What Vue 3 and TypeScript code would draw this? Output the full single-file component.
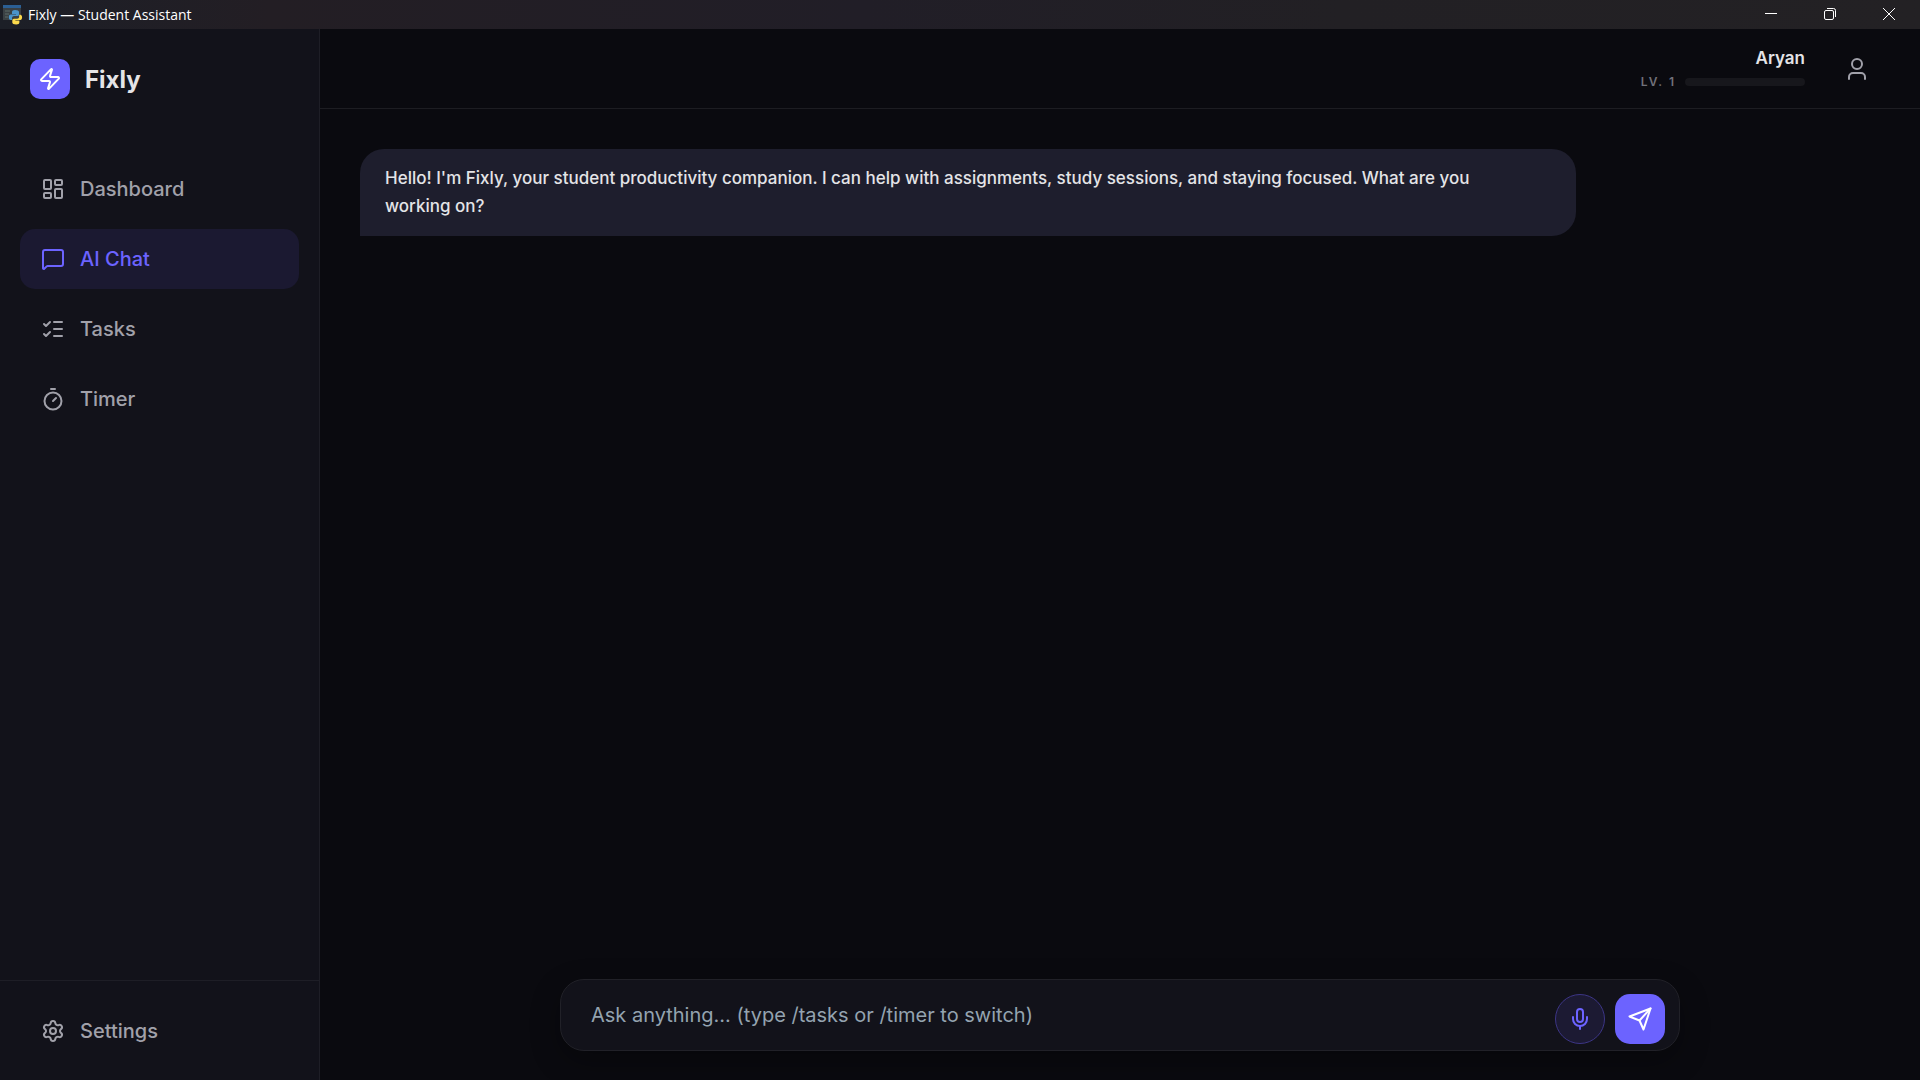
<script setup lang="ts">
import { ref } from 'vue'

interface NavItem {
  id: string
  label: string
  paths: string[]
}

const navItems: NavItem[] = [
  {
    id: 'dashboard',
    label: 'Dashboard',
    paths: [
      'M4 3h5a1 1 0 0 1 1 1v7a1 1 0 0 1-1 1H4a1 1 0 0 1-1-1V4a1 1 0 0 1 1-1z',
      'M15 3h5a1 1 0 0 1 1 1v3a1 1 0 0 1-1 1h-5a1 1 0 0 1-1-1V4a1 1 0 0 1 1-1z',
      'M15 12h5a1 1 0 0 1 1 1v7a1 1 0 0 1-1 1h-5a1 1 0 0 1-1-1v-7a1 1 0 0 1 1-1z',
      'M4 16h5a1 1 0 0 1 1 1v3a1 1 0 0 1-1 1H4a1 1 0 0 1-1-1v-3a1 1 0 0 1 1-1z',
    ],
  },
  {
    id: 'chat',
    label: 'AI Chat',
    paths: [
      'M22 17a2 2 0 0 1-2 2H6.828a2 2 0 0 0-1.414.586l-2.202 2.202A.71.71 0 0 1 2 21.286V5a2 2 0 0 1 2-2h16a2 2 0 0 1 2 2z',
    ],
  },
  {
    id: 'tasks',
    label: 'Tasks',
    paths: ['M13 5h8', 'M13 12h8', 'M13 19h8', 'm3 17 2 2 4-4', 'm3 7 2 2 4-4'],
  },
  {
    id: 'timer',
    label: 'Timer',
    paths: ['M10 2h4', 'M12 14l3-3', 'M20.500 14a8.500 8.500 0 1 1-17 0 8.500 8.500 0 0 1 17 0z'],
  },
]

const active = ref('chat')
const draft = ref('')
const messages = ref<string[]>([
  "Hello! I'm Fixly, your student productivity companion. I can help with assignments, study sessions, and staying focused. What are you working on?",
])

function send(): void {
  const text = draft.value.trim()
  if (!text) return
  messages.value.push(text)
  draft.value = ''
}
</script>

<template>
  <div class="window">
    <div class="titlebar">
      <svg class="app-icon" viewBox="0 0 20 20" aria-hidden="true">
        <rect x="0" y="0" width="18" height="15" fill="#3a4044" />
        <rect x="0" y="0" width="18" height="3" fill="#2b5f94" />
        <path d="M2 6h5M2 9h4M2 12h3" stroke="#5d6a66" stroke-width="1" />
        <path d="M12 5c-2 0-3 .8-3 2v2h4v.6H7.800c-1.300 0-2 1.200-2 2.700s.8 2.700 2 2.700H9v-2c0-1.200 1-2 2-2h3.500c1 0 1.500-.8 1.500-1.600V7c0-1.300-1.400-2-4-2z" fill="#4a94cc" />
        <path d="M13.200 19.500c2.200 0 3.200-.8 3.200-2v-2h-4V15h4.800c1.300 0 1.900-1.200 1.900-2.700s-.7-2.500-1.900-2.500h-1v2c0 1.200-1 2-2 2H11c-1 0-1.700.8-1.700 1.600v2.100c0 1.300 1.400 2 3.900 2z" fill="#fbd94c" />
      </svg>
      <span class="window-title">Fixly — Student Assistant</span>
      <div class="window-controls">
        <button type="button" aria-label="Minimize">
          <svg viewBox="0 0 12 12"><path d="M0 5.500h12" /></svg>
        </button>
        <button type="button" aria-label="Restore">
          <svg viewBox="0 0 12 12">
            <rect x=".5" y="2.500" width="9" height="9" rx="1.500" />
            <path d="M3 .5h6.500a2 2 0 0 1 2 2V9" />
          </svg>
        </button>
        <button type="button" aria-label="Close">
          <svg viewBox="0 0 12 12"><path d="M0 0l12 12M12 0L0 12" /></svg>
        </button>
      </div>
    </div>

    <div class="shell">
      <aside class="sidebar">
        <div class="brand">
          <span class="brand-mark">
            <svg class="icon" viewBox="0 0 24 24" aria-hidden="true">
              <path d="M4 14a1 1 0 0 1-.78-1.630l9.900-10.200a.5.5 0 0 1 .86.460l-1.920 6.020A1 1 0 0 0 13 10h7a1 1 0 0 1 .78 1.630l-9.900 10.200a.5.5 0 0 1-.86-.460l1.920-6.020A1 1 0 0 0 11 14z" />
            </svg>
          </span>
          <span class="brand-name">Fixly</span>
        </div>
        <nav class="nav">
          <button
            v-for="item in navItems"
            :key="item.id"
            type="button"
            class="nav-item"
            :class="{ active: item.id === active }"
            @click="active = item.id"
          >
            <svg class="icon" viewBox="0 0 24 24" aria-hidden="true">
              <path v-for="d in item.paths" :key="d" :d="d" />
            </svg>
            <span>{{ item.label }}</span>
          </button>
        </nav>
        <div class="sidebar-footer">
          <button type="button" class="nav-item">
            <svg class="icon" viewBox="0 0 24 24" aria-hidden="true">
              <path d="M9.671 4.136a2.340 2.340 0 0 1 4.659 0 2.340 2.340 0 0 0 3.319 1.915 2.340 2.340 0 0 1 2.330 4.033 2.340 2.340 0 0 0 0 3.831 2.340 2.340 0 0 1-2.330 4.033 2.340 2.340 0 0 0-3.319 1.915 2.340 2.340 0 0 1-4.659 0 2.340 2.340 0 0 0-3.320-1.915 2.340 2.340 0 0 1-2.330-4.033 2.340 2.340 0 0 0 0-3.831A2.340 2.340 0 0 1 6.350 6.051a2.340 2.340 0 0 0 3.319-1.915" />
              <circle cx="12" cy="12" r="3" />
            </svg>
            <span>Settings</span>
          </button>
        </div>
      </aside>

      <main class="main">
        <header class="topbar">
          <div class="profile">
            <span class="profile-name">Aryan</span>
            <div class="level">
              <span class="level-label">LV. 1</span>
              <span class="level-track"></span>
            </div>
          </div>
          <button type="button" class="account" aria-label="Account">
            <svg class="icon" viewBox="0 0 24 24" aria-hidden="true">
              <path d="M20 22v-2a4 4 0 0 0-4-4H8a4 4 0 0 0-4 4v2" />
              <circle cx="12" cy="7" r="5" />
            </svg>
          </button>
        </header>

        <section class="messages">
          <p v-for="(message, i) in messages" :key="i" class="bubble">{{ message }}</p>
        </section>

        <form class="composer" @submit.prevent="send">
          <input
            v-model="draft"
            type="text"
            aria-label="Message"
            placeholder="Ask anything... (type /tasks or /timer to switch)"
          />
          <button type="button" class="mic" aria-label="Voice input">
            <svg class="icon" viewBox="0 0 24 24" aria-hidden="true">
              <path d="M12 19v3" />
              <path d="M19 10v2a7 7 0 0 1-14 0v-2" />
              <rect x="9" y="2" width="6" height="13" rx="3" />
            </svg>
          </button>
          <button type="submit" class="send" aria-label="Send">
            <svg class="icon" viewBox="0 0 24 24" aria-hidden="true">
              <path d="M22.500 1.500 1.500 9.500 11.500 13.500 15.500 22.500z" />
              <path d="M22.500 1.500 11.500 13.500" />
            </svg>
          </button>
        </form>
      </main>
    </div>
  </div>
</template>

<style>
body {
  margin: 0;
  background: #0a0a0f;
}
</style>

<style scoped>
.window {
  display: flex;
  flex-direction: column;
  height: 100vh;
  box-sizing: border-box;
  color: #e4e4e7;
  font-family: Inter, 'Liberation Sans', sans-serif;
}
button {
  padding: 0;
  border: 0;
  background: none;
  color: inherit;
  font: inherit;
  cursor: pointer;
}
.icon {
  width: 24px;
  height: 24px;
  flex: none;
  fill: none;
  stroke: currentColor;
  stroke-width: 2;
  stroke-linecap: round;
  stroke-linejoin: round;
}
.titlebar {
  display: flex;
  align-items: center;
  flex: none;
  height: 29px;
  padding-left: 3px;
  background: linear-gradient(90deg, #1c1f27 0%, #231e24 14%, #211e27 45%, #222024 70%, #232124 100%);
}
.app-icon {
  width: 20px;
  height: 20px;
}
.window-title {
  margin-left: 5px;
  color: #fff;
  font-family: 'Open Sans', 'Noto Sans', sans-serif;
  font-size: 14px;
}
.window-controls {
  display: flex;
  align-self: stretch;
  margin-left: auto;
  padding: 0 2px 1px 0;
}
.window-controls button {
  display: flex;
  align-items: center;
  justify-content: center;
  width: 59px;
}
.window-controls svg {
  width: 12px;
  height: 12px;
  overflow: visible;
  fill: none;
  stroke: #fff;
  stroke-width: 1;
}
.shell {
  display: flex;
  flex: 1;
  min-height: 0;
}
.sidebar {
  display: flex;
  flex-direction: column;
  flex: none;
  width: 320px;
  box-sizing: border-box;
  border-right: 1px solid #1e1e26;
  background: #12121a;
}
.brand {
  display: flex;
  align-items: center;
  gap: 15px;
  padding: 30px;
}
.brand-mark {
  display: flex;
  align-items: center;
  justify-content: center;
  width: 40px;
  height: 40px;
  border-radius: 10px;
  background: #6c63ff;
  color: #fff;
}
.brand-name {
  font-size: 24px;
  font-weight: 700;
}
.nav {
  display: flex;
  flex-direction: column;
  flex: 1;
  gap: 10px;
  padding: 30px 20px;
}
.nav-item {
  display: flex;
  align-items: center;
  gap: 15px;
  width: 100%;
  height: 60px;
  padding: 0 21px;
  border-radius: 15px;
  color: #a1a1aa;
  font-size: 20px;
  font-weight: 500;
}
.nav-item.active {
  background: #1b1931;
  color: #6c63ff;
}
.sidebar-footer {
  padding: 20px 20px 19px;
  border-top: 1px solid #1e1e26;
}
.main {
  display: flex;
  flex-direction: column;
  flex: 1;
  min-width: 0;
  background: #0a0a0f;
}
.topbar {
  display: flex;
  align-items: center;
  justify-content: flex-end;
  gap: 28px;
  flex: none;
  height: 80px;
  box-sizing: border-box;
  padding-right: 39px;
  border-bottom: 1px solid #1d1d22;
}
.profile {
  display: flex;
  flex-direction: column;
  align-items: flex-end;
  gap: 4px;
  padding-bottom: 2px;
}
.profile-name {
  font-size: 17px;
  font-weight: 600;
  line-height: 24px;
}
.level {
  display: flex;
  align-items: center;
  gap: 9px;
}
.level-label {
  color: #71717a;
  font-size: 12px;
  font-weight: 600;
  line-height: 16px;
  letter-spacing: 2px;
}
.level-track {
  width: 120px;
  height: 8px;
  border-radius: 4px;
  background: #17171c;
}
.account {
  display: flex;
  align-items: center;
  justify-content: center;
  width: 48px;
  height: 48px;
  color: #a1a1aa;
}
.messages {
  display: flex;
  flex-direction: column;
  flex: 1;
  align-items: flex-start;
  gap: 20px;
  min-height: 0;
  padding: 40px;
  overflow: auto;
}
.bubble {
  width: 80%;
  box-sizing: border-box;
  margin: 0;
  padding: 15px 40px 16px 25px;
  border-radius: 24px 24px 24px 0;
  background: #1e1e2d;
  font-size: 17px;
  font-weight: 500;
  line-height: 28px;
}
.composer {
  display: flex;
  align-items: flex-start;
  gap: 10px;
  flex: none;
  width: 70%;
  height: 72px;
  box-sizing: border-box;
  margin: 0 auto 29px;
  padding: 14px 14px 0 30px;
  border: 1px solid #212128;
  border-radius: 24px;
  background: #12121a;
  box-shadow: 0 10px 30px rgba(0, 0, 0, 0.3);
}
.composer input {
  flex: 1;
  min-width: 0;
  height: 42px;
  padding: 0;
  border: 0;
  outline: 0;
  background: none;
  color: inherit;
  font: 400 20px Inter, 'Liberation Sans', sans-serif;
}
.composer input::placeholder {
  color: #94a3b0;
  opacity: 1;
}
.composer button {
  display: flex;
  align-items: center;
  justify-content: center;
  flex: none;
  width: 50px;
  height: 50px;
  box-sizing: border-box;
}
.composer .mic {
  border: 1px solid #3c3585;
  border-radius: 50%;
  background: #1c1a33;
  color: #6c63ff;
}
.composer .send {
  border-radius: 15px;
  background: #6c63ff;
  color: #fff;
}
</style>
